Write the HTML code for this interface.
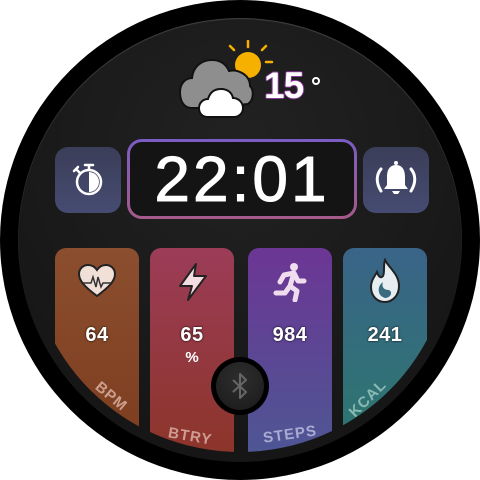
<!DOCTYPE html>
<html><head><meta charset="utf-8"><style>
*{margin:0;padding:0;box-sizing:border-box}
body{width:480px;height:480px;background:#fff;position:relative;overflow:hidden;font-family:"Liberation Sans","DejaVu Sans",sans-serif}
.outer{position:absolute;left:0;top:0;width:480px;height:480px;border-radius:50%;background:#000}
.inner{position:absolute;left:18px;top:18px;width:444px;height:444px;border-radius:50%;background:radial-gradient(circle at 50% 30%,#222 0%,#171717 70%,#141414 100%);box-shadow:inset 0 1px 1px rgba(255,255,255,.18)}
.clip{position:absolute;left:28px;top:28px;width:424px;height:424px;border-radius:50%;overflow:hidden}
.card{position:absolute;top:220px;width:84px;height:230px;border-radius:11px 11px 0 0}
.num{position:absolute;left:0;width:100%;top:76px;text-align:center;color:#fff;font-weight:bold;font-size:20px;letter-spacing:.5px;text-shadow:0 0 2px #000}
.lbl{position:absolute;color:rgba(230,190,180,.75);font-weight:bold;font-size:15px;letter-spacing:1px}
.btn{position:absolute;top:147px;width:66px;height:66px;border-radius:13px;background:linear-gradient(#3b3e58,#464b72)}
.time{position:absolute;left:127px;top:139px;width:230px;height:80px;border-radius:15px;padding:3px;background:linear-gradient(#7a5cc4,#a65a8a)}
.time div{width:100%;height:100%;border-radius:12px;background:#141414;color:#fff;font-size:64px;text-align:center;line-height:74px;letter-spacing:3px;-webkit-text-stroke:1px #fff}
</style></head><body>
<div class="outer"></div>
<div class="inner"></div>
<div class="clip">
 <div class="card" style="left:27px;background:linear-gradient(#8b4e2e,#7a3b1c)">
  <svg style="position:absolute;left:22px;top:15px" width="40" height="36" viewBox="0 0 40 36"><path d="M20 33 C8 24 2 18 2 11 C2 5 7 2 11 2 C15 2 18 4 20 7 C22 4 25 2 29 2 C33 2 38 5 38 11 C38 18 32 24 20 33Z" fill="#f0e0d8" stroke="#222" stroke-width="2"/><path d="M6 20 H14 L16 14 L19 24 L21 14 L24 24 L26 20 H34" fill="none" stroke="#333" stroke-width="1.5"/></svg>
  <div class="num">64</div>
  <div class="lbl" style="left:38px;top:140px;transform:rotate(40deg)">BPM</div>
 </div>
 <div class="card" style="left:122px;background:linear-gradient(#9c3c58,#8a3424)">
  <svg style="position:absolute;left:26px;top:14px" width="34" height="40" viewBox="0 0 34 40"><path d="M20 2 L4 24 H16 L12 38 L30 14 H18 Z" fill="#f3dde2" stroke="#222" stroke-width="2" stroke-linejoin="round"/></svg>
  <div class="num">65</div>
  <div style="position:absolute;width:100%;top:101px;text-align:center;color:#fff;font-weight:bold;font-size:15px">%</div>
  <div class="lbl" style="left:18px;top:180px;transform:rotate(10deg)">BTRY</div>
 </div>
 <div class="card" style="left:220px;background:linear-gradient(#6c3694,#4a5a94)">
  <svg style="position:absolute;left:22px;top:14px" width="40" height="40" viewBox="0 0 40 40"><circle cx="24" cy="5" r="4" fill="#f0dcef"/><path d="M14 13 L24 11 L28 19 L34 19 M24 11 L20 24 L27 29 L25 38 M20 24 L15 31 L6 31 M14 13 L10 20" fill="none" stroke="#f0dcef" stroke-width="5" stroke-linecap="round" stroke-linejoin="round"/></svg>
  <div class="num">984</div>
  <div class="lbl" style="left:15px;top:178px;transform:rotate(-8deg);color:rgba(200,200,230,.75)">STEPS</div>
 </div>
 <div class="card" style="left:315px;background:linear-gradient(#3a6488,#2a7a6a)">
  <svg style="position:absolute;left:24px;top:10px" width="36" height="46" viewBox="0 0 36 46"><path d="M18 2 C22 10 32 16 32 28 C32 38 25 44 18 44 C10 44 4 38 4 29 C4 22 8 18 10 14 C12 20 14 20 16 18 C18 14 16 8 18 2Z" fill="#e6eef2" stroke="#222" stroke-width="2"/><path d="M16 24 C10 28 10 38 18 40 C24 40 26 34 22 32 C18 32 14 30 16 24Z" fill="#3a6a80"/></svg>
  <div class="num">241</div>
  <div class="lbl" style="left:2px;top:142px;transform:rotate(-45deg);color:rgba(170,210,200,.75)">KCAL</div>
 </div>
</div>
<div style="position:absolute;left:211px;top:357px;width:58px;height:58px;border-radius:50%;background:#000"></div>
<div style="position:absolute;left:216px;top:362px;width:48px;height:48px;border-radius:50%;background:radial-gradient(circle at 50% 35%,#2e2e2e,#1a1a1a)">
 <svg style="position:absolute;left:14px;top:10px" width="20" height="28" viewBox="0 0 20 28"><path d="M3 8 L16 20 L10 26 V2 L16 8 L3 20" fill="none" stroke="#666" stroke-width="2" stroke-linejoin="round"/></svg>
</div>
<div class="btn" style="left:55px"><svg style="position:absolute;left:13px;top:12px" width="40" height="40" viewBox="0 0 40 40"><circle cx="21" cy="23" r="12" fill="none" stroke="#fff" stroke-width="2.5"/><path d="M21 23 V13 A10 10 0 0 1 21 33 Z" fill="#fff"/><path d="M17 6 H25 M21 6 V11 M8 10 L12 14 M6 12 L10 8" stroke="#fff" stroke-width="2.5" stroke-linecap="round"/></svg></div>
<div class="btn" style="left:363px"><svg style="position:absolute;left:10px;top:12px" width="46" height="42" viewBox="0 0 46 42"><path d="M23 6 C16 6 14 12 14 18 V26 L11 30 H35 L32 26 V18 C32 12 30 6 23 6Z" fill="#fff"/><circle cx="23" cy="4" r="2" fill="#fff"/><path d="M19 32 H27 L25 35 H21Z" fill="#fff"/><path d="M8 10 C3 16 3 24 8 32 M38 10 C43 16 43 24 38 32" fill="none" stroke="#fff" stroke-width="3" stroke-linecap="round"/></svg></div>
<div class="time"><div>22:01</div></div>
<svg style="position:absolute;left:178px;top:40px" width="100" height="80" viewBox="0 0 100 80">
 <g stroke="#f6b000" stroke-width="2.5" stroke-linecap="round"><path d="M70 1 V7 M52 6 L56 10 M88 6 L84 10 M94 22 H88"/></g>
 <circle cx="70" cy="25" r="13" fill="#f6b000"/>
 <path d="M14 68 C5 68 2 60 2 52 C2 43 8 38 14 38 C15 27 23 20 34 20 C42 20 48 24 51 31 C59 29 72 34 72 46 C76 50 76 60 70 64 L30 68Z" fill="#8e8e8e" stroke="#111" stroke-width="2"/>
 <path d="M30 77 C23 77 21 72 21 68 C21 63 25 59 30 59 C32 52 37 49 43 49 C50 49 54 53 55 58 C61 58 65 63 65 68 C65 74 60 77 56 77Z" fill="#fff" stroke="#111" stroke-width="2"/>
</svg>
<div style="position:absolute;left:264px;top:66px;color:#fff;font-weight:bold;font-size:37px;line-height:40px;letter-spacing:-1px;text-shadow:1px 0 #8a3a9a,-1px 0 #8a3a9a,0 1px #8a3a9a,0 -1px #8a3a9a">15</div>
<div style="position:absolute;left:312px;top:77px;width:8px;height:8px;border:2px solid #fff;border-radius:50%"></div>
</body></html>
